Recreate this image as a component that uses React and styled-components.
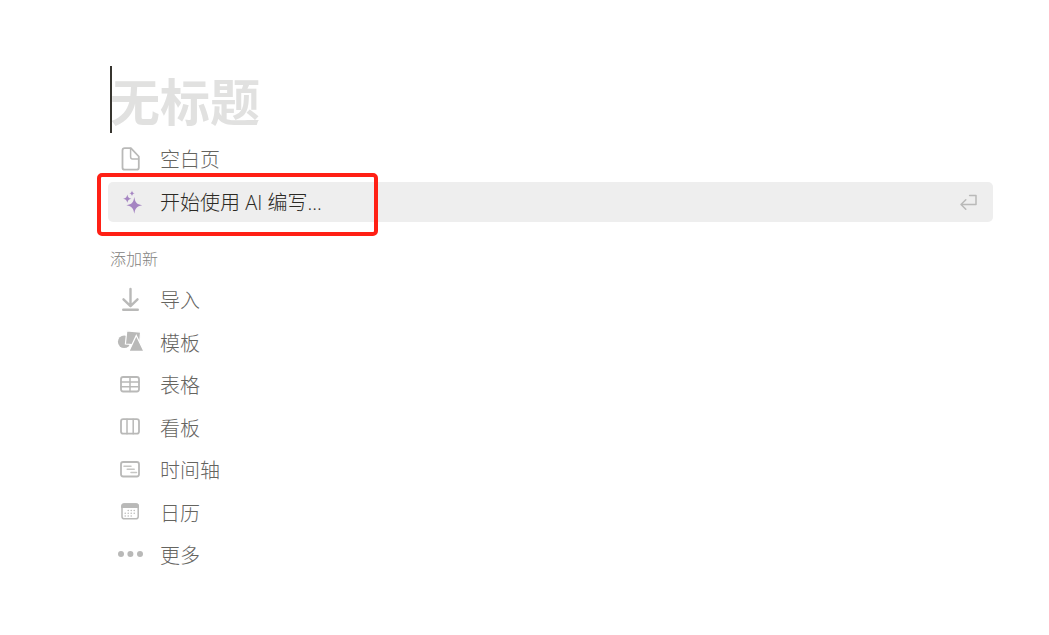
import React from 'react';
import styled, { createGlobalStyle } from 'styled-components';

const GlobalStyle = createGlobalStyle`
  * { box-sizing: border-box; }
  body {
    margin: 0;
    background: #fff;
    font-family: "Open Sans", "Noto Sans CJK SC", sans-serif;
    font-weight: 300;
  }
`;

const Page = styled.main`
  padding: 66px 56px 56px 108px;
`;

const TitleInput = styled.input`
  display: block;
  width: calc(100% - 2px);
  height: 67px;
  margin: 0 0 6px 2px;
  padding: 0 0 2px;
  border: 0;
  border-left: 2px solid #37352f;
  outline: 0;
  background: transparent;
  color: #37352f;
  font-family: "Noto Sans CJK SC", sans-serif;
  font-size: 50px;
  font-weight: 700;
  line-height: 63px;
  text-indent: -2px;

  &::placeholder {
    color: #e1e1e0;
    opacity: 1;
  }
`;

const StartList = styled.div`
  display: flex;
  flex-direction: column;
  gap: 3px;
`;

const AddList = styled.div`
  display: flex;
  flex-direction: column;
  justify-content: space-between;
  min-height: 295px;
`;

const Highlighted = styled.div`
  position: relative;
`;

const Marker = styled.div`
  position: absolute;
  top: -9px;
  left: -11px;
  width: 281px;
  height: 63px;
  border: 4px solid #ff2015;
  border-radius: 5px;
  pointer-events: none;
`;

const Option = styled.button`
  display: flex;
  align-items: center;
  gap: 16px;
  width: 100%;
  height: 40px;
  padding: 0 10px 0 8px;
  border: 0;
  border-radius: 5px;
  background: ${({ $active }) => ($active ? '#eeeeee' : 'transparent')};
  color: ${({ $active }) => ($active ? '#2b2924' : '#65645f')};
  font: inherit;
  font-size: 20px;
  line-height: 28px;
  text-align: left;
  cursor: pointer;
`;

const OptionLabel = styled.span`
  flex: 1;
  padding-top: 2px;
`;

const SectionLabel = styled.h2`
  margin: 24px 0 8px 2px;
  color: #83827e;
  font-size: 16px;
  font-weight: 300;
  line-height: 26px;
`;

const Glyph = styled.svg`
  flex: none;
  width: 28px;
  height: 28px;
  fill: none;
  stroke: #b9b9b8;
  stroke-width: 1.8;
  stroke-linecap: round;
  stroke-linejoin: round;

  .solid { fill: #b9b9b8; stroke: none; }
  .spark { fill: #a585c2; stroke: none; }
  .edged { fill: #b9b9b8; stroke: #fff; stroke-width: 1.2; stroke-linejoin: miter; }
  .thin { stroke-width: 1.5; }
  .faint { stroke-width: 1.5; stroke: #c6c6c4; }
`;

const Icon = ({ children }) => (
  <Glyph viewBox="0 0 28 28" aria-hidden="true">{children}</Glyph>
);

const icons = {
  page: (
    <>
      <path d="M8.8 3.2h6.1l7.9 8.3v10.9a2.3 2.3 0 0 1-2.3 2.3H8.8a2.3 2.3 0 0 1-2.3-2.3V5.5a2.3 2.3 0 0 1 2.3-2.3z" />
      <path className="thin" d="M14.6 3.5v8.6a1.8 1.8 0 0 0 1.8 1.8h6.2" />
    </>
  ),
  ai: (
    <>
      <path className="spark" d="M18.3 9c.9 5.3 2.2 7.3 7.9 8.3-5.7 1-7 3.2-7.9 8.5-.9-5.3-2.2-7.5-7.9-8.5 5.7-1 7-3 7.9-8.3z" />
      <path className="spark" d="M11.3 6.6c.6 2.7 1.3 3.6 4.2 4.1-2.9.5-3.6 1.5-4.2 4.1-.6-2.6-1.3-3.6-4.2-4.1 2.9-.5 3.6-1.4 4.2-4.1z" />
      <path className="spark" d="M16 2.5c.4 1.8.9 2.4 2.8 2.8-1.9.4-2.4 1-2.8 2.8-.4-1.8-.9-2.4-2.8-2.8 1.9-.4 2.4-1 2.8-2.8z" />
    </>
  ),
  enter: (
    <path className="thin" d="M14.6 7.5H21v9H6.2M10.8 11.8l-4.8 4.7 4.8 4.7" />
  ),
  import: (
    <>
      <path strokeWidth="2.4" d="M14.5 3v17M7.5 13.3l7 6.9 7-6.9" />
      <path strokeWidth="2.4" d="M7.2 23.7h14.6" />
    </>
  ),
  template: (
    <>
      <circle className="solid" cx="8.2" cy="12.8" r="6.3" />
      <path className="edged" d="M10.8 1.8 24.6 3.1 23.4 16.2 9.4 15z" />
      <path className="edged" d="M20.3 6.4 28 22.4H12.8z" />
    </>
  ),
  table: (
    <>
      <rect x="5" y="6" width="18" height="14.5" rx="2.2" />
      <path className="thin" d="M5 10.9h18M5 15.7h18M14 6v14.5" />
    </>
  ),
  board: (
    <>
      <rect x="5" y="5.2" width="18" height="14.5" rx="2.2" />
      <path className="thin" d="M11 5.2v14.5M17.2 5.2v14.5" />
    </>
  ),
  timeline: (
    <>
      <rect x="5" y="6" width="18" height="14.5" rx="2.2" />
      <path className="faint" d="M8 10.3h7M11.2 13.3h7M15 16.4h5.5" />
    </>
  ),
  calendar: (
    <>
      <rect className="thin" x="6" y="5" width="16.2" height="14.8" rx="2.4" />
      <path className="solid" d="M5.2 8.9V7.2a3 3 0 0 1 3-3H20a3 3 0 0 1 3 3v1.7z" />
      <path
        strokeWidth="1.5"
        d="M12.2 11.4h.01M15.2 11.4h.01M18.2 11.4h.01M9.2 14.2h.01M12.2 14.2h.01M15.2 14.2h.01M18.2 14.2h.01M9.2 17h.01M12.2 17h.01M15.2 17h.01"
      />
    </>
  ),
  more: (
    <>
      <circle className="solid" cx="5" cy="13" r="3" />
      <circle className="solid" cx="14.4" cy="13" r="3" />
      <circle className="solid" cx="24" cy="13" r="3" />
    </>
  ),
};

const addOptions = [
  ['import', '导入'],
  ['template', '模板'],
  ['table', '表格'],
  ['board', '看板'],
  ['timeline', '时间轴'],
  ['calendar', '日历'],
  ['more', '更多'],
];

export default function App() {
  return (
    <>
      <GlobalStyle />
      <Page lang="zh-CN">
        <TitleInput type="text" placeholder="无标题" aria-label="标题" />
        <StartList>
          <Option type="button">
            <Icon>{icons.page}</Icon>
            <OptionLabel>空白页</OptionLabel>
          </Option>
          <Highlighted>
            <Option type="button" $active>
              <Icon>{icons.ai}</Icon>
              <OptionLabel>开始使用 AI 编写...</OptionLabel>
              <Icon>{icons.enter}</Icon>
            </Option>
            <Marker />
          </Highlighted>
        </StartList>
        <SectionLabel>添加新</SectionLabel>
        <AddList>
          {addOptions.map(([name, label]) => (
            <Option type="button" key={name}>
              <Icon>{icons[name]}</Icon>
              <OptionLabel>{label}</OptionLabel>
            </Option>
          ))}
        </AddList>
      </Page>
    </>
  );
}
